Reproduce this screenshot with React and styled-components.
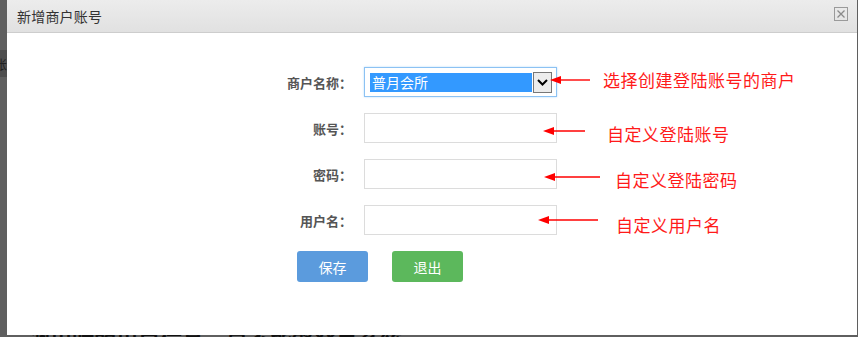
import React from "react";
import styled, { createGlobalStyle } from "styled-components";

const Global = createGlobalStyle`
  html, body { margin: 0; padding: 0; }
  body {
    background: #5f5f5f;
    font-family: "Noto Sans CJK SC", "Noto Sans", sans-serif;
    overflow: hidden;
  }
`;

const Screen = styled.div`
  width: 858px;
  height: 337px;
  overflow: hidden;
  background: #5f5f5f;
  position: relative;
`;

const SideTab = styled.div`
  position: absolute;
  left: 0;
  top: 50px;
  width: 7px;
  height: 27px;
  background: #4e4e4e;
  overflow: hidden;
  color: #222;
  font-size: 13px;
  line-height: 27px;
  text-indent: -6px;
`;

const Dialog = styled.div`
  position: relative;
  z-index: 2;
  margin-left: 7px;
  width: 850px;
  height: 335px;
  background: #fff;
  display: flex;
  flex-direction: column;
`;

const Header = styled.div`
  height: 32px;
  flex-shrink: 0;
  background: linear-gradient(#ececec, #e1e1e1);
  border-bottom: 1px solid #cdcdcd;
  display: flex;
  align-items: center;
  justify-content: space-between;
  padding: 0 9px 0 10px;
`;

const Title = styled.h3`
  margin: 0;
  font-size: 14px;
  font-weight: normal;
  color: #333;
  letter-spacing: 0.2px;
`;

const CloseBtn = styled.span`
  width: 12px;
  height: 12px;
  border: 1px solid #9a9a9a;
  display: flex;
  align-items: center;
  justify-content: center;
  margin-top: -4px;
`;

const Body = styled.div`
  padding-top: 34px;
  display: flex;
  flex-direction: column;
  gap: 16px;
`;

const Row = styled.div`
  position: relative;
  display: flex;
  align-items: center;
  gap: 12px;
  height: 30px;
`;

const Label = styled.label`
  width: 80px;
  margin-left: 265px;
  text-align: right;
  font-size: 13px;
  font-weight: bold;
  color: #555;
  white-space: nowrap;
`;

const Input = styled.div`
  width: 191px;
  height: 28px;
  border: 1px solid #dcdcdc;
  background: #fff;
`;

const SelectBox = styled.div`
  width: 182px;
  height: 28px;
  border: 1px solid #8cc2f3;
  box-shadow: 0 0 2px #b9dbfa;
  display: flex;
  align-items: center;
  padding: 0 4px 0 5px;
`;

const Chosen = styled.span`
  flex: 1;
  height: 19px;
  background: #3399ff;
  color: #fff;
  font-size: 14px;
  line-height: 19px;
  padding-left: 2px;
`;

const DropBtn = styled.span`
  width: 17px;
  height: 19px;
  border: 1px solid #777;
  background: #ececec;
  display: flex;
  align-items: center;
  justify-content: center;
  margin-left: 1px;
`;

const Note = styled.div`
  position: absolute;
  left: ${(p) => p.$left}px;
  top: ${(p) => p.$top}px;
  display: flex;
  align-items: flex-start;
  gap: ${(p) => p.$gap}px;
`;

const NoteText = styled.span`
  margin-top: ${(p) => p.$shift}px;
  font-size: 17px;
  line-height: 20px;
  color: #ff1a1a;
  letter-spacing: 0.5px;
  white-space: nowrap;
`;

const Actions = styled.div`
  display: flex;
  gap: 24px;
  margin-left: 290px;
`;

const Button = styled.button`
  width: 71px;
  height: 31px;
  border: none;
  border-radius: 3px;
  background: ${(p) => (p.$kind === "exit" ? "#5cb85c" : "#5b9bdd")};
  color: #fff;
  font-family: inherit;
  font-size: 14px;
  padding: 0;
`;

const Behind = styled.div`
  position: relative;
  z-index: 1;
  margin-left: 28px;
  font-size: 22px;
  line-height: 8px;
  color: #111;
  font-weight: bold;
  white-space: nowrap;
`;

function Arrow({ len }) {
  return (
    <svg width={len} height="10" viewBox={`0 0 ${len} 10`}>
      <line x1="8" y1="5" x2={len} y2="5" stroke="#ff0000" strokeWidth="1.4" />
      <polygon points="0,5 11,1 11,9" fill="#ff0000" />
    </svg>
  );
}

function Annotation({ tip, len, gap, top, shift, children }) {
  return (
    <Note $left={tip - 7} $top={top} $gap={gap}>
      <Arrow len={len} />
      <NoteText $shift={shift}>{children}</NoteText>
    </Note>
  );
}

const fields = [
  { label: "账号：", note: "自定义登陆账号", tip: 543, len: 42, gap: 22, top: 13, shift: -2 },
  { label: "密码：", note: "自定义登陆密码", tip: 544, len: 56, gap: 15, top: 13, shift: -2 },
  { label: "用户名：", note: "自定义用户名", tip: 538, len: 60, gap: 18, top: 10, shift: 0 },
];

export default function App() {
  return (
    <Screen>
      <Global />
      <SideTab>账</SideTab>
      <Dialog>
        <Header>
          <Title>新增商户账号</Title>
          <CloseBtn>
            <svg width="10" height="10" viewBox="0 0 10 10">
              <path d="M1.5 1.5 L8.5 8.5 M8.5 1.5 L1.5 8.5" stroke="#8a8a8a" strokeWidth="1.3" />
            </svg>
          </CloseBtn>
        </Header>
        <Body>
          <Row>
            <Label>商户名称：</Label>
            <SelectBox>
              <Chosen>普月会所</Chosen>
              <DropBtn>
                <svg width="11" height="8" viewBox="0 0 11 8">
                  <path d="M1 2 L5.5 6.5 L10 2" stroke="#000" strokeWidth="2" fill="none" />
                </svg>
              </DropBtn>
            </SelectBox>
            <Annotation tip={550} len={40} gap={13} top={8} shift={-5}>
              选择创建登陆账号的商户
            </Annotation>
          </Row>
          {fields.map((f) => (
            <Row key={f.label}>
              <Label>{f.label}</Label>
              <Input />
              <Annotation tip={f.tip} len={f.len} gap={f.gap} top={f.top} shift={f.shift}>
                {f.note}
              </Annotation>
            </Row>
          ))}
          <Actions>
            <Button>保存</Button>
            <Button $kind="exit">退出</Button>
          </Actions>
        </Body>
      </Dialog>
      <Behind>调用时的用户信息，是否能够登录系统</Behind>
    </Screen>
  );
}
